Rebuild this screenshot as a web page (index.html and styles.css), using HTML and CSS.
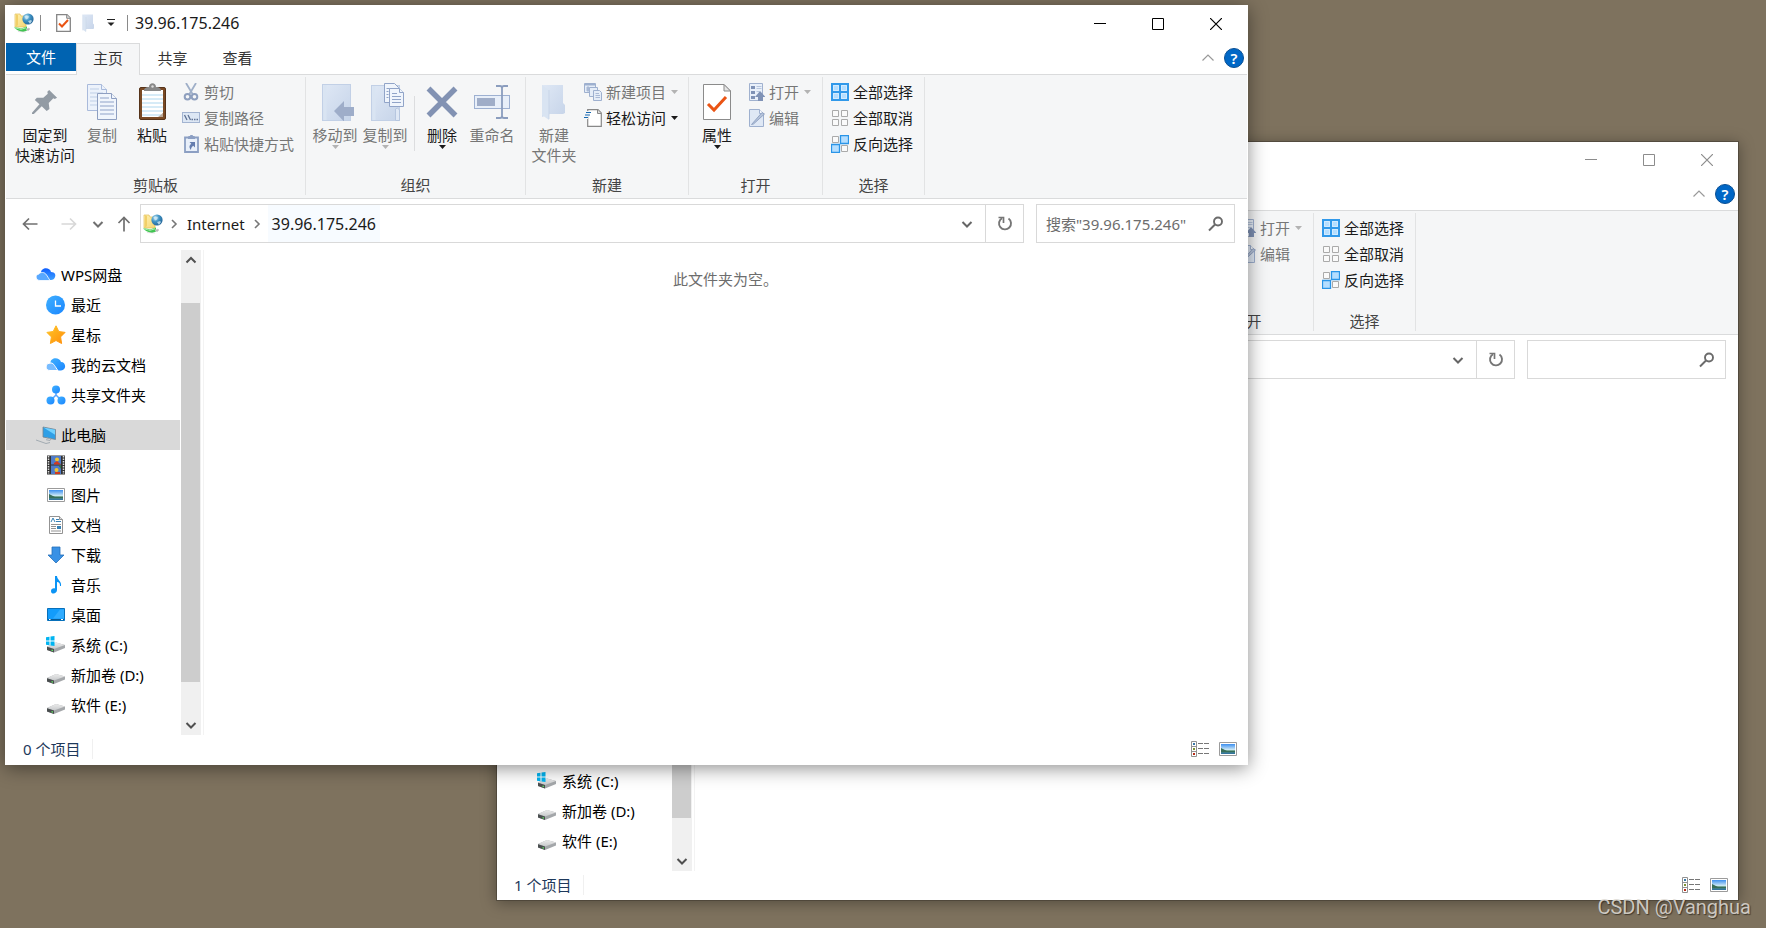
FILE: index.html
```html
<!DOCTYPE html>
<html lang="zh-CN">
<head>
<meta charset="utf-8">
<meta name="viewport" content="width=device-width, initial-scale=1">
<title>39.96.175.246</title>
<link rel="stylesheet" href="styles.css">
</head>
<body>
<svg class="sprite" aria-hidden="true">
  <defs>
    <linearGradient id="gFolder" x1="0" y1="0" x2="1" y2="1"><stop offset="0" stop-color="#fff0b0"/><stop offset="1" stop-color="#f5d673"/></linearGradient>
    <radialGradient id="gGlobe" cx=".35" cy=".3" r=".8"><stop offset="0" stop-color="#b5e0f2"/><stop offset=".45" stop-color="#3f93c4"/><stop offset="1" stop-color="#1c5a8e"/></radialGradient>
    <linearGradient id="gPale" x1="0" y1="0" x2="1" y2="1"><stop offset="0" stop-color="#dfe8f5"/><stop offset="1" stop-color="#c6d4e9"/></linearGradient>
    <linearGradient id="gBlue" x1="0" y1="0" x2="1" y2="1"><stop offset="0" stop-color="#40b0ff"/><stop offset="1" stop-color="#1a86ff"/></linearGradient>
    <linearGradient id="gCloud" x1="0" y1="0" x2="0" y2="1"><stop offset="0" stop-color="#0f5fff"/><stop offset="1" stop-color="#3ea0ff"/></linearGradient>
    <linearGradient id="gStar" x1="0" y1="0" x2="1" y2="1"><stop offset="0" stop-color="#ffc627"/><stop offset="1" stop-color="#ff8d0a"/></linearGradient>
    <linearGradient id="gSky" x1="0" y1="0" x2="0" y2="1"><stop offset="0" stop-color="#3c8ff0"/><stop offset=".55" stop-color="#c9e6f5"/><stop offset=".7" stop-color="#4f8a6b"/><stop offset="1" stop-color="#2e70a8"/></linearGradient>
    <linearGradient id="gDrive" x1="0" y1="0" x2="0" y2="1"><stop offset="0" stop-color="#ececec"/><stop offset="1" stop-color="#c6c8ca"/></linearGradient>
  </defs>

  <symbol id="net-folder" viewBox="0 0 20 20">
    <path d="M1 1h5l1 2h5v11H1z" fill="url(#gFolder)" stroke="#e3be56" stroke-width=".7"/>
    <path d="M2 1v13l2-2V2z" fill="#f1cf68"/>
    <circle cx="14" cy="6" r="5.6" fill="url(#gGlobe)"/>
    <path d="M10.500 3.500c2-2 3-.5 4.500 0l-1 2-2 1zM14 8l3-1 1 1-2 3z" fill="#d8eef7" opacity=".75"/>
    <path d="M0 14.500c3 0 5 .2 7 1l6-2v4l-4 1.500-2-.5c-3-1-5-2-7-4z" fill="#41c552"/>
    <path d="M1 15c3 .2 4 1 6 1.300l5-1.500" fill="none" stroke="#b1efb1" stroke-width="1"/>
    <path d="M12 16l3-1 1 1-2 2zM4 18.500l8 .5" fill="#b7b7b7" stroke="#ccc" stroke-width=".6"/>
  </symbol>
  <symbol id="page-check" viewBox="0 0 28 36">
    <path d="M.5.5H21l6.500 6.500v28.500H.5z" fill="#fff" stroke="#8b8b8b"/>
    <path d="M21 .5V7h6.500z" fill="#e6e6e6" stroke="#8b8b8b"/>
    <path d="M5 20l6 6 12-13" fill="none" stroke="#ea5414" stroke-width="3"/>
  </symbol>
  <symbol id="page-check-small" viewBox="0 0 15 18">
    <path d="M.7.7H11l3.300 3.300v13.300H.7z" fill="#fff" stroke="#858585" stroke-width="1.300"/>
    <path d="M10.700.7v3.600h3.600" fill="#ddd" stroke="#858585"/>
    <path d="M3 9.500l3 3 6-6.500" fill="none" stroke="#ea5414" stroke-width="2"/>
  </symbol>
  <symbol id="folder-pale" viewBox="0 0 26 36">
    <path d="M1 1h21v18l2 2v8l-2 1H9L1 33z" fill="url(#gPale)"/>
    <path d="M1 1l7 5v30l-7-5z" fill="#d9e4f2"/>
    <path d="M8 6v29" stroke="#c2d0e5" stroke-width=".7"/>
  </symbol>
  <symbol id="pin" viewBox="0 0 28 28">
    <path d="M18.500 1L27 9.500l-2.500 1.200-1.500-.7-5 5 .8 6.500-3 2.300-5.300-5.300L2 27H0v-1.500l8-9L3 11.800l2.200-2.500 7 .2L17 5l-.5-2z" fill="#929ba4"/>
  </symbol>
  <symbol id="copy" viewBox="0 0 30 36">
    <g fill="#ecf2fb" stroke="#a9badb"><path d="M.5.5h14l5 5v21H.5z"/><path d="M14.500.5v5h5"/></g>
    <path d="M3 5h9M3 9h13M3 13h13M3 17h13M3 21h13" stroke="#bfcfe6"/>
    <g fill="#f0f5fc" stroke="#8e9fc1"><path d="M10.500 9.500h14l5 5v21h-19z"/><path d="M24.500 9.500v5h5"/></g>
    <path d="M13 14h9M13 18h14M13 22h14M13 26h14M13 30h14" stroke="#8fa2c8"/>
  </symbol>
  <symbol id="paste" viewBox="0 0 27 37">
    <rect x=".5" y="4.500" width="26" height="32" rx="1.500" fill="#7a4a25" stroke="#55331a"/>
    <path d="M3 7h21v23l-2 4H3z" fill="#fff"/>
    <path d="M3 12h21M3 16h21M3 20h21M3 24h21M3 28h21M3 32h19" stroke="#aed7ef"/>
    <path d="M19 34l5-4v4z" fill="#b9a899"/>
    <path d="M5 8c0-3 2-4 5-4 0-5 7-5 7 0 3 0 5 1 5 4z" fill="#888"/><circle cx="13.500" cy="3.500" r="1.200" fill="#ddd"/>
  </symbol>
  <symbol id="cut" viewBox="0 0 18 18">
    <path d="M4 0l6.500 11M14 0L7.500 11" stroke="#9fafc8" stroke-width="1.800"/>
    <circle cx="5.500" cy="13.700" r="2.800" fill="none" stroke="#8e9fbe" stroke-width="2"/><circle cx="12.500" cy="13.700" r="2.800" fill="none" stroke="#8e9fbe" stroke-width="2"/>
  </symbol>
  <symbol id="path" viewBox="0 0 18 18">
    <rect x=".5" y="3.500" width="17" height="10" fill="#dde7f4" stroke="#a3b4d1"/>
    <path d="M2.500 6l2.500 5M6 6l2.500 5" stroke="#5f7294" stroke-width="1.300"/><path d="M9.500 10.500h1.500M12 10.500h1.500M14.500 10.500H16" stroke="#5f7294" stroke-width="1.300"/>
  </symbol>
  <symbol id="shortcut" viewBox="0 0 18 18">
    <path d="M3 2.500h13v14.500H3z" fill="#e9f0fa" stroke="#8c9fc3" stroke-width="1.800"/><path d="M6 2c0-1 1-1 2-1 0-1.500 3-1.500 3 0 1 0 2 0 2 1v2H6z" fill="#8c9fc3"/>
    <path d="M7.500 7H13v5.500l-1.800-1.800C9.500 12 9 13 9 15c-2.500-2.500-1.500-5 .3-6.200z" fill="#647daf"/>
  </symbol>
  <symbol id="move-to" viewBox="0 0 32 38">
    <rect x=".5" y="1.500" width="28" height="36" fill="url(#gPale)" stroke="#c2d0e6"/><path d="M3 2v35" stroke="#d9e4f2" stroke-width="3"/>
    <path d="M12 28l10-10v6h10v9H22v5.500z" fill="#9eadc9"/>
  </symbol>
  <symbol id="copy-to" viewBox="0 0 34 38">
    <rect x=".5" y="2.500" width="28" height="35" fill="url(#gPale)" stroke="#c2d0e6"/><path d="M24.500 26v11.500h4V27l-2-2z" fill="#dfe8f5" stroke="#b6c6df"/><path d="M3 3v34" stroke="#d9e4f2" stroke-width="3"/>
    <g fill="#f0f5fc" stroke="#91a4c8"><path d="M13.500.5h10l4 4v15h-14z"/><path d="M18.500 5.500h10l4 4v14h-14z"/><path d="M28.500 5.500v4h4"/></g>
    <path d="M21 10.500h5M21 13.500h9M21 16.500h9M21 19.500h9M15.500 5.500h3M15.500 8.500h2M15.500 11.500h2M15.500 14.500h2" stroke="#91a4c8"/>
  </symbol>
  <symbol id="delete" viewBox="0 0 32 32"><path d="M2.500 2.500l27 27M29.500 2.500l-27 27" stroke="#8292b3" stroke-width="5.500"/></symbol>
  <symbol id="rename" viewBox="0 0 36 34">
    <rect x=".5" y="10.500" width="35" height="13" fill="#e8eff9" stroke="#9db0d1"/><rect x="3" y="13" width="18" height="8" fill="#9fadc8"/>
    <path d="M22 1h4q2 0 2 2v28q0 2-2 2h-4M34 1h-4q-2 0-2 2v28q0 2 2 2h4" fill="none" stroke="#8b9dbe" stroke-width="1.800"/>
  </symbol>
  <symbol id="new-item" viewBox="0 0 18 18">
    <g fill="#e5edf8" stroke="#9eb0cf"><path d="M.5.500h11v9H.5z"/><path d="M5.500 4.500h8v9h-8z"/><path d="M9.500 7.500h6l2 2v8h-8z"/></g><path d="M1 1.500h10" stroke="#9eb0cf" stroke-width="2"/><path d="M3 4h2v4H3zM11.500 10.500H15M11.500 12.500H16M11.500 14.500H16" stroke="#a9b9d5" fill="#a9b9d5"/>
  </symbol>
  <symbol id="easy-access" viewBox="0 0 18 18">
    <path d="M3.700.7H14l3.300 3.300v13.300H3.700z" fill="#fff" stroke="#888" stroke-width="1.200"/><path d="M13.500.7v3.800h3.800" fill="#ddd" stroke="#888"/>
    <path d="M2 3.500h4M1 6h4M0 8.500h4" stroke="#f5f6f7" stroke-width="3"/><path d="M2 3.500h5M1 6h5M0 8.500h4" stroke="#1669b2" stroke-width="1.200"/>
  </symbol>
  <symbol id="open" viewBox="0 0 18 18">
    <path d="M2.500.5h13v17h-13z" fill="#e9f0fa" stroke="#a0b1cf"/><path d="M4 3h4v3H4zM4 8h4v3H4zM4 13h4v3H4z" fill="#7f92b6"/><path d="M9.500 3.500h5M9.500 5.500h5M9.500 8.500h3" stroke="#b7c6de"/>
    <path d="M13 8l5.500 6H16v4h-5v-4H8z" fill="#7f92b6"/>
  </symbol>
  <symbol id="edit" viewBox="0 0 18 18">
    <path d="M2.500.5h10l4 4v13h-14z" fill="#dfe8f5" stroke="#9eb0cf"/><path d="M12.500.5v4h4" fill="#f5f8fd" stroke="#9eb0cf"/><path d="M4.500 15.500L15 3.500l2.500 1.500-11 10z" fill="#b5c3da" stroke="#8799bd" stroke-width=".8"/>
  </symbol>
  <symbol id="select-all" viewBox="0 0 18 18"><path d="M1 1h16v16H1z" fill="#b5deff" stroke="#3199ea" stroke-width="2"/><path d="M9 0v18M0 9h18" stroke="#3199ea" stroke-width="2"/><path d="M2.500 2.500h5v5h-5zM10.500 2.500h5v5h-5zM2.500 10.500h5v5h-5zM10.500 10.500h5v5h-5z" fill="none" stroke="#d2ebff"/></symbol>
  <symbol id="select-none" viewBox="0 0 18 18"><path d="M1.500 1.500h6v6h-6zM10.500 1.500h6v6h-6zM1.500 10.500h6v6h-6zM10.500 10.500h6v6h-6z" fill="#fafafa" stroke="#aaa"/></symbol>
  <symbol id="select-invert" viewBox="0 0 18 18"><path d="M1.500 1.500h6v6h-6zM10.500 10.500h6v6h-6z" fill="#fafafa" stroke="#aaa"/><path d="M9.500.500h8v8h-8zM.5 9.500h8v8h-8z" fill="#b5deff" stroke="#2a95e8" stroke-width="1.300"/></symbol>

  <symbol id="caret" viewBox="0 0 7 4"><path d="M0 0h7L3.500 4z" fill="currentColor"/></symbol>
  <symbol id="qat-caret" viewBox="0 0 8 8"><path d="M0 .5h8" stroke="#222"/><path d="M.5 3.500h7L4 7z" fill="#222"/></symbol>
  <symbol id="minimize" viewBox="0 0 12 12"><path d="M0 5.500h12" stroke="currentColor"/></symbol>
  <symbol id="maximize" viewBox="0 0 12 12"><path d="M.5.5h11v11H.5z" fill="none" stroke="currentColor"/></symbol>
  <symbol id="close" viewBox="0 0 12 12"><path d="M0 0l12 12M12 0L0 12" stroke="currentColor" stroke-width="1.200"/></symbol>
  <symbol id="chev-up" viewBox="0 0 12 12"><path d="M.5 8.500L6 3l5.500 5.500" fill="none" stroke="currentColor" stroke-width="1.200"/></symbol>
  <symbol id="chev-down" viewBox="0 0 12 12"><path d="M1.500 4L6 8.500 10.500 4" fill="none" stroke="currentColor" stroke-width="2"/></symbol>
  <symbol id="chev-right" viewBox="0 0 12 12"><path d="M4 2l4 4-4 4" fill="none" stroke="#777" stroke-width="1.600"/></symbol>
  <symbol id="scroll-up" viewBox="0 0 12 12"><path d="M1.500 8.500L6 4l4.500 4.500" fill="none" stroke="#505050" stroke-width="2"/></symbol>
  <symbol id="back" viewBox="0 0 16 16"><path d="M15.500 8H1.500M7 2.500L1.500 8 7 13.500" fill="none" stroke="currentColor" stroke-width="1.700"/></symbol>
  <symbol id="refresh" viewBox="0 0 16 16"><path d="M11.500 2.500A6 6 0 1 1 5 2.200" fill="none" stroke="#767676" stroke-width="1.900"/><path d="M1.500 1.500h5V7" fill="none" stroke="#767676" stroke-width="1.700"/></symbol>
  <symbol id="search" viewBox="0 0 16 16"><circle cx="10" cy="5.500" r="4" fill="none" stroke="#6b6b6b" stroke-width="1.900"/><path d="M7 8.500l-6 6" stroke="#6b6b6b" stroke-width="2"/></symbol>

  <symbol id="wps-cloud" viewBox="0 0 20 20">
    <path d="M5 8c0-6 9-6 10-1 4 0 5 3 4 5-.5 2-2 3-4 3H9z" fill="url(#gCloud)"/><path d="M6.500 7.500C10 7.500 11 11 14 15.500H4c-5 0-5-6-1-6.500.5-1 1.500-1.500 3.500-1.500z" fill="#58a8ff" stroke="#fff" stroke-width=".8"/>
  </symbol>
  <symbol id="recent" viewBox="0 0 20 20"><circle cx="9.500" cy="10" r="9.500" fill="url(#gBlue)"/><path d="M9.500 5.500V11H15" fill="none" stroke="#fff" stroke-width="1.300"/></symbol>
  <symbol id="star" viewBox="0 0 20 20"><path d="M10 .8l2.800 5.700 6.300.9-4.500 4.500 1 6.600L10 15.500l-5.600 3 1-6.600L.9 7.400l6.300-.9z" fill="url(#gStar)" stroke="url(#gStar)" stroke-linejoin="round"/></symbol>
  <symbol id="docs-cloud" viewBox="0 0 20 20">
    <path d="M4.500 8c0-6 9-6 10.500-1 5 0 6 8 0 8.500H11z" fill="url(#gBlue)"/><path d="M5 8c3 0 4 4 7 7.500H4C-1 15.500-1 9 3 8.300z" fill="#78bcff" stroke="#fff" stroke-width="1"/>
  </symbol>
  <symbol id="share" viewBox="0 0 20 20"><path d="M10 5v6M10 10l-5 5M10 10l5 5" stroke="#58a5ff" stroke-width="1.500"/><g fill="url(#gBlue)"><circle cx="10" cy="4.500" r="4"/><circle cx="4.500" cy="15.500" r="4"/><circle cx="15.500" cy="15.500" r="4"/></g></symbol>
  <symbol id="pc" viewBox="0 0 20 20"><path d="M7 2l12.500 2.500v10L7 12z" fill="#2f9fe6" stroke="#76838e" stroke-width=".8"/><path d="M7.500 2.500l11.500 2.300v5z" fill="#70d2ff"/><path d="M11 13l4 1-1 1.500-4-.8M0 15l10 3.500 4-1" fill="none" stroke="#a2abb2"/></symbol>
  <symbol id="video" viewBox="0 0 20 20"><path d="M1 .5h18v19H1z" fill="#333"/><path d="M2.500 1v18M17.500 1v18" stroke="#ddd" stroke-width="1.500" stroke-dasharray="1.500 1"/><path d="M5 1h10v8.500H5zM5 10.500h10V19H5z" fill="#4e7bc9"/><circle cx="11" cy="4.500" r="2" fill="#f0c330"/><path d="M8 8l3-2 4 3.500H8z" fill="#cf3a22"/><circle cx="10.500" cy="15" r="2" fill="#f0c330"/><path d="M9 17h5v2H9z" fill="#cf3a22"/><path d="M12.500 10.500H15V14z" fill="#2d7d43"/></symbol>
  <symbol id="picture" viewBox="0 0 20 20"><path d="M1.500 3.500h17v13h-17z" fill="#fff" stroke="#9b9b9b"/><path d="M3 5h14v10H3z" fill="url(#gSky)"/><path d="M3 9l6 3h8v1H3z" fill="#386e59"/></symbol>
  <symbol id="document" viewBox="0 0 20 20"><path d="M3.500 1.500h10l3 3v14h-13z" fill="#fff" stroke="#939393"/><path d="M13.500 1.500v3h3" fill="#ddd" stroke="#939393"/><path d="M5 7l2-4 2 4M10 4.500h3M10 6.500h5" fill="none" stroke="#3580b5"/><path d="M5 9.500h10M5 11.500h5M5 13.500h5M5 16h10" stroke="#939393"/><path d="M11 11h4v3h-4z" fill="#3580b5"/></symbol>
  <symbol id="download" viewBox="0 0 20 20"><path d="M6 2h8v8h4l-8 8-8-8h4z" fill="#3991e5" stroke="#2570ba" stroke-width=".8"/></symbol>
  <symbol id="music" viewBox="0 0 20 20"><path d="M9 1h2c0 4 5 5 4 10h-1c0-3-1-4-3-4v8c0 4-6 5-6 1 0-2 2-3 4-2.500z" fill="#0b94f5"/></symbol>
  <symbol id="desktop" viewBox="0 0 20 20"><path d="M1.500 3.500h17v12h-17z" fill="#139cfb" stroke="#0870ba"/><path d="M7 13.500l7-9h4v9z" fill="#31acff"/><path d="M2 14.500h16" stroke="#075a96"/><path d="M3 14.500h1.500M15 14.500h2" stroke="#fff"/></symbol>
  <symbol id="drive" viewBox="0 0 20 20"><path d="M1 13l9-4 9 2.500v3L8 19l-7-2.500z" fill="#a4a7aa"/><path d="M1 13l9-4 9 2.500L8 15.500z" fill="url(#gDrive)"/><path d="M1 13.300l7 2.200V19l-7-2.500z" fill="#4a4e4f"/><path d="M5.500 16.700l1.500.5" stroke="#60df64" stroke-width="1.300"/></symbol>
  <symbol id="drive-c" viewBox="0 0 20 20"><path d="M1 11.500l9-4 9 2.500v3L8 17.500 1 15z" fill="#a4a7aa"/><path d="M1 11.500l9-4 9 2.500L8 14z" fill="url(#gDrive)"/><path d="M1 11.800l7 2.200v3.500L1 15z" fill="#4a4e4f"/><path d="M5.500 15.200l1.500.5" stroke="#60df64" stroke-width="1.300"/><path d="M0 2.300l3.500-.5v3.700H0zM4.500 1.600L8.500 1v4.500h-4zM0 6.500h3.500v3.800L0 9.800zM4.500 6.500h4V11l-4-.6z" fill="#00b4f1"/></symbol>
  <symbol id="view-details" viewBox="0 0 18 16"><path d="M.5.500h5v15h-5zM.5 5.500h5M.5 10.500h5" fill="#fff" stroke="#929292"/><path d="M2 2h2v2H2z" fill="#3778a8"/><path d="M2 7h2v2H2z" fill="#7e9232"/><path d="M2 12h2v2H2z" fill="#b82c18"/><path d="M7 2.500h5M13 2.500h5M7 7.500h5M13 7.500h5M7 12.500h5M13 12.500h5" stroke="#777"/></symbol>
</svg>

<main class="desktop">
  <section class="window window--back">
    <header class="titlebar">
      <div class="window-buttons">
        <button aria-label="最小化"><svg class="i12"><use href="#minimize"/></svg></button>
        <button aria-label="最大化"><svg class="i12"><use href="#maximize"/></svg></button>
        <button aria-label="关闭"><svg class="i12"><use href="#close"/></svg></button>
      </div>
    </header>
    <div class="tabs">
      <div class="tabs-end">
        <button class="collapse" aria-label="最小化功能区"><svg class="i12"><use href="#chev-up"/></svg></button>
        <button class="help">?</button>
      </div>
    </div>
    <div class="ribbon">
      <div class="group group--open">
        <div class="tools">
          <div class="stack">
            <button class="small" disabled><svg class="i18"><use href="#open"/></svg>打开<svg class="caret"><use href="#caret"/></svg></button>
            <button class="small" disabled><svg class="i18"><use href="#edit"/></svg>编辑</button>
          </div>
        </div>
        <div class="group-name">打开</div>
      </div>
      <div class="group group--select">
        <div class="tools">
          <div class="stack">
            <button class="small"><svg class="i18"><use href="#select-all"/></svg>全部选择</button>
            <button class="small"><svg class="i18"><use href="#select-none"/></svg>全部取消</button>
            <button class="small"><svg class="i18"><use href="#select-invert"/></svg>反向选择</button>
          </div>
        </div>
        <div class="group-name">选择</div>
      </div>
    </div>
    <div class="navbar">
      <div class="address">
        <div class="crumbs"></div>
        <button class="drop" aria-label="以前的位置"><svg class="i12"><use href="#chev-down"/></svg></button>
        <button class="refresh" aria-label="刷新"><svg class="i16"><use href="#refresh"/></svg></button>
      </div>
      <label class="search"><input type="search" aria-label="搜索"><svg class="i16"><use href="#search"/></svg></label>
    </div>
    <div class="body">
      <nav class="tree">
        <a class="node node--child" href="#"><svg class="i20"><use href="#drive-c"/></svg>系统 (C:)</a>
        <a class="node node--child" href="#"><svg class="i20"><use href="#drive"/></svg>新加卷 (D:)</a>
        <a class="node node--child" href="#"><svg class="i20"><use href="#drive"/></svg>软件 (E:)</a>
      </nav>
      <div class="scrollbar">
        <button aria-label="向上"><svg class="i12"><use href="#scroll-up"/></svg></button>
        <div class="thumb"></div>
        <button aria-label="向下"><svg class="i12"><use href="#chev-down"/></svg></button>
      </div>
      <div class="content"></div>
    </div>
    <footer class="statusbar">
      <span class="count">1 个项目</span>
      <div class="views">
        <button aria-label="详细信息"><svg class="view-icon"><use href="#view-details"/></svg></button>
        <button aria-label="缩略图"><svg class="i20"><use href="#picture"/></svg></button>
      </div>
    </footer>
  </section>

  <section class="window window--front">
    <header class="titlebar">
      <div class="quick">
        <svg class="i20"><use href="#net-folder"/></svg>
        <span class="bar"></span>
        <button class="quick-prop" aria-label="属性"><svg class="icon-prop-small"><use href="#page-check-small"/></svg></button>
        <button class="quick-folder" aria-label="新建文件夹"><svg class="icon-folder-small"><use href="#folder-pale"/></svg></button>
        <button class="quick-more" aria-label="自定义快速访问工具栏"><svg class="i8"><use href="#qat-caret"/></svg></button>
        <span class="bar"></span>
        <h1 class="title">39.96.175.246</h1>
      </div>
      <div class="window-buttons">
        <button aria-label="最小化"><svg class="i12"><use href="#minimize"/></svg></button>
        <button aria-label="最大化"><svg class="i12"><use href="#maximize"/></svg></button>
        <button aria-label="关闭"><svg class="i12"><use href="#close"/></svg></button>
      </div>
    </header>
    <div class="tabs">
      <button class="tab tab--file">文件</button>
      <button class="tab tab--active">主页</button>
      <button class="tab">共享</button>
      <button class="tab">查看</button>
      <div class="tabs-end">
        <button class="collapse" aria-label="最小化功能区"><svg class="i12"><use href="#chev-up"/></svg></button>
        <button class="help">?</button>
      </div>
    </div>
    <div class="ribbon">
      <div class="group group--clipboard">
        <div class="tools">
          <button class="big big--wide"><span class="pic"><svg class="icon-pin"><use href="#pin"/></svg></span><span>固定到</span><span>快速访问</span></button>
          <button class="big" disabled><span class="pic"><svg class="icon-copy"><use href="#copy"/></svg></span><span>复制</span></button>
          <button class="big"><span class="pic"><svg class="icon-paste"><use href="#paste"/></svg></span><span>粘贴</span></button>
          <div class="stack">
            <button class="small" disabled><svg class="i18"><use href="#cut"/></svg>剪切</button>
            <button class="small" disabled><svg class="i18"><use href="#path"/></svg>复制路径</button>
            <button class="small" disabled><svg class="i18"><use href="#shortcut"/></svg>粘贴快捷方式</button>
          </div>
        </div>
        <div class="group-name">剪贴板</div>
      </div>
      <div class="group group--organize">
        <div class="tools">
          <button class="big" disabled><span class="pic pic--shifted"><svg class="icon-move"><use href="#move-to"/></svg></span><span>移动到</span><svg class="caret"><use href="#caret"/></svg></button>
          <button class="big" disabled><span class="pic pic--shifted"><svg class="icon-copy-to"><use href="#copy-to"/></svg></span><span>复制到</span><svg class="caret"><use href="#caret"/></svg></button>
          <span class="split"></span>
          <button class="big"><span class="pic"><svg class="icon-delete"><use href="#delete"/></svg></span><span>删除</span><svg class="caret"><use href="#caret"/></svg></button>
          <button class="big" disabled><span class="pic"><svg class="icon-rename"><use href="#rename"/></svg></span><span>重命名</span></button>
        </div>
        <div class="group-name">组织</div>
      </div>
      <div class="group group--new">
        <div class="tools">
          <button class="big" disabled><span class="pic"><svg class="icon-folder"><use href="#folder-pale"/></svg></span><span>新建</span><span>文件夹</span></button>
          <div class="stack">
            <button class="small" disabled><svg class="i18"><use href="#new-item"/></svg>新建项目<svg class="caret"><use href="#caret"/></svg></button>
            <button class="small"><svg class="i18"><use href="#easy-access"/></svg>轻松访问<svg class="caret"><use href="#caret"/></svg></button>
          </div>
        </div>
        <div class="group-name">新建</div>
      </div>
      <div class="group group--open">
        <div class="tools">
          <button class="big"><span class="pic"><svg class="icon-prop"><use href="#page-check"/></svg></span><span>属性</span><svg class="caret"><use href="#caret"/></svg></button>
          <div class="stack">
            <button class="small" disabled><svg class="i18"><use href="#open"/></svg>打开<svg class="caret"><use href="#caret"/></svg></button>
            <button class="small" disabled><svg class="i18"><use href="#edit"/></svg>编辑</button>
          </div>
        </div>
        <div class="group-name">打开</div>
      </div>
      <div class="group group--select">
        <div class="tools">
          <div class="stack">
            <button class="small"><svg class="i18"><use href="#select-all"/></svg>全部选择</button>
            <button class="small"><svg class="i18"><use href="#select-none"/></svg>全部取消</button>
            <button class="small"><svg class="i18"><use href="#select-invert"/></svg>反向选择</button>
          </div>
        </div>
        <div class="group-name">选择</div>
      </div>
    </div>
    <div class="navbar">
      <div class="history">
        <button aria-label="返回"><svg class="i16"><use href="#back"/></svg></button>
        <button class="forward" aria-label="前进" disabled><svg class="i16 flip"><use href="#back"/></svg></button>
        <button class="recent" aria-label="最近浏览的位置"><svg class="i12"><use href="#chev-down"/></svg></button>
        <button class="up" aria-label="上移"><svg class="i16 turn"><use href="#back"/></svg></button>
      </div>
      <div class="address">
        <nav class="crumbs">
          <svg class="i20"><use href="#net-folder"/></svg>
          <svg class="i12"><use href="#chev-right"/></svg>
          <a href="#">Internet</a>
          <svg class="i12"><use href="#chev-right"/></svg>
          <a class="current" href="#">39.96.175.246</a>
        </nav>
        <button class="drop" aria-label="以前的位置"><svg class="i12"><use href="#chev-down"/></svg></button>
        <button class="refresh" aria-label="刷新"><svg class="i16"><use href="#refresh"/></svg></button>
      </div>
      <label class="search"><input type="search" placeholder="搜索&quot;39.96.175.246&quot;" aria-label="搜索"><svg class="i16"><use href="#search"/></svg></label>
    </div>
    <div class="body">
      <nav class="tree">
        <a class="node" href="#"><svg class="i20"><use href="#wps-cloud"/></svg>WPS网盘</a>
        <a class="node node--child" href="#"><svg class="i20"><use href="#recent"/></svg>最近</a>
        <a class="node node--child" href="#"><svg class="i20"><use href="#star"/></svg>星标</a>
        <a class="node node--child" href="#"><svg class="i20"><use href="#docs-cloud"/></svg>我的云文档</a>
        <a class="node node--child" href="#"><svg class="i20"><use href="#share"/></svg>共享文件夹</a>
        <a class="node node--selected" href="#"><svg class="i20"><use href="#pc"/></svg>此电脑</a>
        <a class="node node--child" href="#"><svg class="i20"><use href="#video"/></svg>视频</a>
        <a class="node node--child" href="#"><svg class="i20"><use href="#picture"/></svg>图片</a>
        <a class="node node--child" href="#"><svg class="i20"><use href="#document"/></svg>文档</a>
        <a class="node node--child" href="#"><svg class="i20"><use href="#download"/></svg>下载</a>
        <a class="node node--child" href="#"><svg class="i20"><use href="#music"/></svg>音乐</a>
        <a class="node node--child" href="#"><svg class="i20"><use href="#desktop"/></svg>桌面</a>
        <a class="node node--child" href="#"><svg class="i20"><use href="#drive-c"/></svg>系统 (C:)</a>
        <a class="node node--child" href="#"><svg class="i20"><use href="#drive"/></svg>新加卷 (D:)</a>
        <a class="node node--child" href="#"><svg class="i20"><use href="#drive"/></svg>软件 (E:)</a>
      </nav>
      <div class="scrollbar">
        <button aria-label="向上"><svg class="i12"><use href="#scroll-up"/></svg></button>
        <div class="thumb"></div>
        <button aria-label="向下"><svg class="i12"><use href="#chev-down"/></svg></button>
      </div>
      <div class="content"><p class="empty">此文件夹为空。</p></div>
    </div>
    <footer class="statusbar">
      <span class="count">0 个项目</span>
      <div class="views">
        <button aria-label="详细信息"><svg class="view-icon"><use href="#view-details"/></svg></button>
        <button aria-label="缩略图"><svg class="i20"><use href="#picture"/></svg></button>
      </div>
    </footer>
  </section>
  <div class="watermark">CSDN @Vanghua</div>
</main>
</body>
</html>
```
FILE: styles.css
```css
* { box-sizing: border-box; }

body {
  margin: 0;
  font: 15px/20px "Noto Sans", "Noto Sans CJK SC", sans-serif;
  color: #1a1a1a;
}

button {
  display: flex;
  align-items: center;
  justify-content: center;
  padding: 0;
  border: 0;
  background: none;
  color: inherit;
  font: inherit;
  white-space: nowrap;
}

a { color: inherit; text-decoration: none; }
svg { display: block; flex: none; }

.sprite { position: absolute; width: 0; height: 0; }
.i8 { width: 8px; height: 8px; }
.i12 { width: 12px; height: 12px; }
.i16 { width: 16px; height: 16px; }
.i18 { width: 18px; height: 18px; }
.i20 { width: 20px; height: 20px; }
.caret { width: 7px; height: 4px; }
.flip { transform: scaleX(-1); }
.turn { transform: rotate(90deg); }

.desktop {
  position: relative;
  height: 100vh;
  overflow: hidden;
  background: #7e725e;
}

/* Windows */
.window {
  position: absolute;
  display: flex;
  flex-direction: column;
  border: 1px solid #fff;
  background: #fff;
  background-clip: padding-box;
}
.window--front {
  inset: 5px 518px 163px 5px;
  box-shadow: 0 3px 18px rgba(0, 0, 0, .45);
}
.window--back {
  inset: 141px 27px 27px 496px;
  border-color: rgba(60, 54, 44, .5);
  box-shadow: 0 2px 14px rgba(0, 0, 0, .35);
}

.titlebar {
  display: flex;
  flex: none;
  height: 37px;
}
.quick {
  display: flex;
  align-items: center;
  padding: 0 0 3px 8px;
}
.bar { width: 1px; height: 16px; margin-left: 6px; background: #8a8a8a; }
.quick-prop { margin-left: 15px; }
.icon-prop-small { width: 15px; height: 18px; }
.quick-folder { margin-left: 11px; }
.icon-folder-small { width: 13px; height: 18px; }
.quick-more { margin: 0 6px 0 12px; }
.title { margin: 0 0 0 7px; font-size: 16px; font-weight: 400; }
.window-buttons {
  display: flex;
  margin-left: auto;
  padding: 0 2px 2px 0;
}
.window-buttons button { width: 58px; color: #000; }
.window--back .window-buttons button { color: #8c8c8c; }

/* Tabs */
.tabs { display: flex; flex: none; height: 31px; }
.tab { width: 65px; padding-bottom: 2px; color: #333; }
.tab--file {
  width: 70px;
  height: 28px;
  padding-bottom: 0;
  background: #0063b1;
  color: #fff;
}
.tab--active {
  width: 64px;
  height: 32px;
  padding-bottom: 4px;
  border: 1px solid #dadbdc;
  border-bottom: 0;
  background: #f5f6f7;
  z-index: 1;
}
.tabs-end {
  display: flex;
  align-items: center;
  gap: 10px;
  margin-left: auto;
  padding: 0 3px 2px 0;
}
.collapse { color: #999; }
.help {
  width: 20px;
  height: 20px;
  border: 1px solid #0a4f94;
  border-radius: 50%;
  background: #0067c6;
  color: #fff;
  font-weight: 600;
}

/* Ribbon */
.ribbon {
  display: flex;
  flex: none;
  height: 125px;
  padding: 2px 0 3px;
  border: solid #dadbdc;
  border-width: 1px 0;
  background: #f5f6f7;
}
.group {
  display: flex;
  flex-direction: column;
  justify-content: space-between;
  border-right: 1px solid #e2e3e4;
}
.tools { display: flex; padding-right: 11px; }
.group--clipboard .tools { padding-left: 7px; }
.group--organize .tools { padding: 0 8px 0 4px; }
.group--new .tools { padding: 0 10px 0 3px; }
.group--open .tools { padding-left: 3px; }
.group--select .tools { padding-left: 8px; }
.window--back .ribbon { padding-left: 683px; }
.window--back .group--open .tools { padding-left: 53px; }
.group-name { text-align: center; color: #444; }

.big {
  flex-direction: column;
  justify-content: flex-start;
  width: 50px;
  padding-top: 5px;
}
.big--wide { width: 64px; }
.pic {
  display: flex;
  align-items: center;
  height: 39px;
  margin-bottom: 4px;
}
.pic--shifted { padding-left: 6px; }
.big:disabled, .small:disabled { color: #767676; }
:disabled .caret { color: #b3b3b3; }
.icon-pin { width: 26px; height: 26px; }
.icon-copy { width: 30px; height: 36px; }
.icon-paste { width: 27px; height: 37px; }
.icon-move { width: 32px; height: 38px; }
.icon-copy-to { width: 34px; height: 38px; }
.icon-delete { width: 32px; height: 32px; }
.icon-rename { width: 36px; height: 34px; }
.icon-folder { width: 26px; height: 36px; }
.icon-prop { width: 28px; height: 36px; }
.split { width: 1px; height: 55px; margin: 19px 2px 0 4px; background: #dcdddf; }

.stack { display: flex; flex-direction: column; padding: 2px 0 0 5px; }
.group--select .stack { padding-left: 0; }
.small { justify-content: flex-start; gap: 4px; height: 26px; }
.small .caret { margin-left: 1px; }

/* Navigation bar */
.navbar { display: flex; flex: none; height: 51px; padding: 5px 12px 7px 0; }
.history { display: flex; flex: none; width: 134px; padding-left: 16px; color: #707070; }
.history .forward { color: #d8d8d8; margin-left: 23px; }
.history .recent { margin-left: 15px; }
.history .up { margin-left: 12px; }
.address {
  display: flex;
  flex: 1;
  border: 1px solid #d9d9d9;
}
.window--back .address { margin-left: 134px; }
.crumbs { display: flex; flex: 1; align-items: center; padding-left: 2px; }
.crumbs a { padding: 0 6px; }
.crumbs .i12 { margin: 0 1px 0 5px; }
.crumbs .i12:nth-of-type(3) { margin: 0; }
.crumbs .current {
  display: flex;
  align-items: center;
  align-self: stretch;
  padding: 0 4px;
  margin-left: 5px;
  background: #f7fbff;
  font-size: 16px;
}
.drop { width: 36px; color: #666; }
.refresh { width: 38px; border-left: 1px solid #d9d9d9; }
.search {
  display: flex;
  flex: none;
  align-items: center;
  width: 199px;
  margin-left: 12px;
  padding: 0 10px 0 9px;
  border: 1px solid #d9d9d9;
}
.search input {
  flex: 1;
  min-width: 0;
  padding: 0;
  border: 0;
  outline: 0;
  background: none;
  font: inherit;
}
.search input::placeholder { color: #6d6d6d; opacity: 1; }

/* Folder tree and content */
.body { display: flex; flex: 1; min-height: 0; }
.tree {
  display: flex;
  flex: none;
  flex-direction: column;
  width: 175px;
  padding: 10px 1px 15px 0;
  overflow: hidden;
  color: #000;
}
.window--back .tree { justify-content: flex-end; }
.node {
  display: flex;
  flex: none;
  align-items: center;
  gap: 5px;
  height: 30px;
  padding-left: 30px;
}
.node--child { padding-left: 40px; }
.node--selected { margin-top: 10px; background: #d9d9d9; }
.scrollbar {
  display: flex;
  flex: none;
  flex-direction: column;
  width: 20px;
  background: #f0f0f0;
  color: #505050;
}
.scrollbar button { height: 20px; }
.thumb { flex: 1; margin: 33px 1px 33px 0; background: #cdcdcd; }
.content { flex: 1; margin-left: 2px; border-left: 1px solid #f3f3f3; }
.empty { margin: 19px 0 0; text-align: center; color: #6d6d6d; }

.statusbar {
  display: flex;
  flex: none;
  align-items: center;
  justify-content: space-between;
  height: 29px;
  padding: 0 9px 2px 17px;
}
.count { padding-right: 12px; border-right: 1px solid #f0f0f0; color: #1e395b; }
.views { display: flex; align-items: center; gap: 9px; }
.view-icon { width: 18px; height: 16px; }

.watermark {
  position: absolute;
  right: 15px;
  bottom: 9px;
  color: rgba(225, 222, 216, .85);
  font: 20px/24px Roboto, sans-serif;
  text-shadow: 1px 1px 1px rgba(50, 45, 35, .8);
}
```
